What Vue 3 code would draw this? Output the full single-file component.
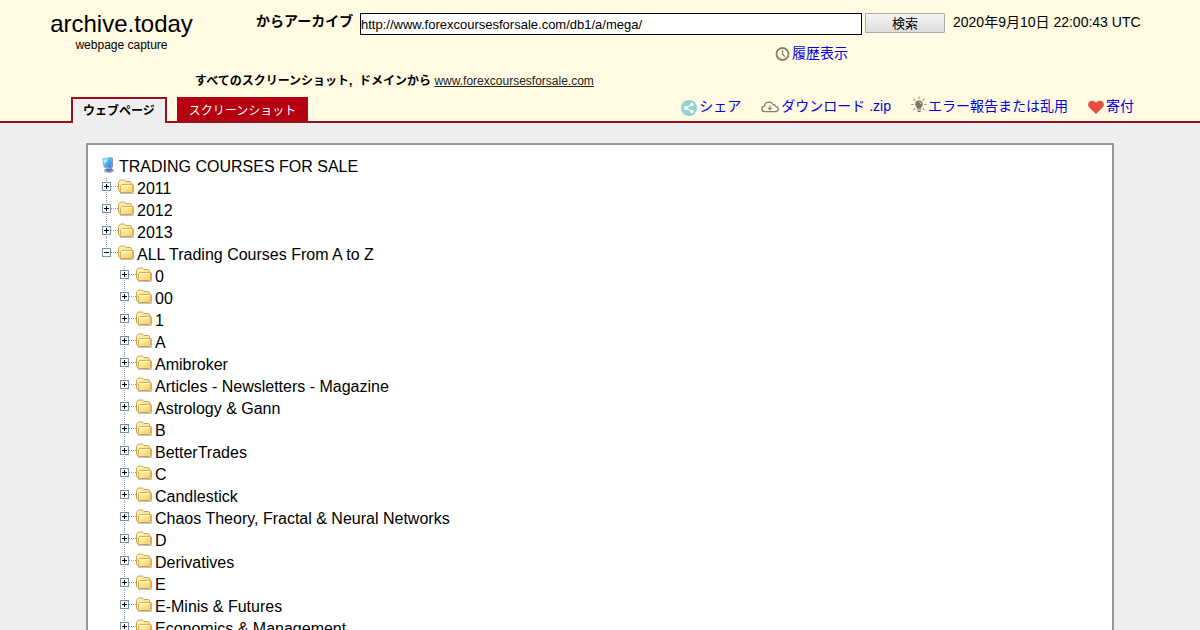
<script setup>
import { ref } from 'vue'

const url = ref('http://www.forexcoursesforsale.com/db1/a/mega/')

const tree = [
  { name: '2011' },
  { name: '2012' },
  { name: '2013' },
  {
    name: 'ALL Trading Courses From A to Z',
    children: [
      '0', '00', '1', 'A', 'Amibroker', 'Articles - Newsletters - Magazine',
      'Astrology & Gann', 'B', 'BetterTrades', 'C', 'Candlestick',
      'Chaos Theory, Fractal & Neural Networks', 'D', 'Derivatives', 'E',
      'E-Minis & Futures', 'Economics & Management',
    ],
  },
]

const rows = tree.flatMap((node) => [
  { name: node.name, level: 0, open: !!node.children },
  ...(node.children || []).map((name) => ({ name, level: 1, open: false })),
])
</script>

<template>
  <div class="page">
    <header class="header">
      <div class="top">
        <div class="brand">
          <a class="brand-name" href="#">archive.today</a>
          <span class="brand-sub">webpage capture</span>
        </div>
        <div class="search">
          <form class="search-form" @submit.prevent>
            <label class="search-label" for="q">からアーカイブ</label>
            <input id="q" v-model="url" class="search-input" type="text" />
            <button class="search-button" type="submit">検索</button>
            <time class="stamp">2020年9月10日 22:00:43 UTC</time>
          </form>
          <div class="history">
            <a class="action" href="#">
              <svg class="icon" width="16" height="16" viewBox="0 0 16 16">
                <circle cx="8.500" cy="8" r="6" fill="none" stroke="#85826f" stroke-width="1.800" />
                <path d="M8.500 4v4.300l2.500 2.500" fill="none" stroke="#85826f" stroke-width="1.300" />
              </svg>履歴表示</a>
          </div>
        </div>
      </div>
      <p class="domain"><b>すべてのスクリーンショット,&nbsp; ドメインから</b> <a href="#">www.forexcoursesforsale.com</a></p>
      <div class="bar">
        <nav class="tabs">
          <a class="tab active" href="#">ウェブページ</a>
          <a class="tab" href="#">スクリーンショット</a>
        </nav>
        <nav class="actions">
          <a class="action" href="#">
            <svg class="icon low" width="16" height="16" viewBox="0 0 16 16">
              <circle cx="8" cy="8" r="8" fill="#8dd5d6" />
              <path d="M11 4.500L5 8l6 3.500" fill="none" stroke="#fff" stroke-width="1.200" />
              <circle cx="11" cy="4.500" r="1.700" fill="#fff" />
              <circle cx="5" cy="8" r="1.900" fill="#fff" />
              <circle cx="11" cy="11.500" r="1.700" fill="#fff" />
            </svg>シェア</a>
          <a class="action" href="#">
            <svg class="icon" width="18" height="16" viewBox="0 0 18 16">
              <path d="M4.500 12.700C2 12.700.8 11.300.8 9.900c0-1.500 1.100-2.500 2.700-2.700C3.600 4.900 5.400 3.200 8 3.200c2 0 3.500 1 4.200 2.600 1-.2 2 .3 2.300 1.500 1.600.2 2.700 1.200 2.700 2.600 0 1.600-1.200 2.800-3.200 2.800z" fill="none" stroke="#85826f" stroke-width="1.300" />
              <path d="M9 6.500v4M7.300 8.900L9 10.600l1.700-1.700" fill="none" stroke="#85826f" stroke-width="1.200" />
            </svg>ダウンロード .zip</a>
          <a class="action" href="#">
            <svg class="icon high" width="16" height="18" viewBox="0 0 16 18">
              <path d="M8 4.500a3.800 3.800 0 0 1 3.800 3.800c0 2-1.800 2.500-1.800 4.500H6c0-2-1.800-2.500-1.800-4.500A3.800 3.800 0 0 1 8 4.500z" fill="#77766a" />
              <path d="M6 14h4M6.500 15.500h3" stroke="#77766a" stroke-width="1" />
              <path d="M8 .5v2.200M.3 8.500h2.400M13.300 8.500h2.400M2.500 3l1.700 1.700M13.500 3l-1.700 1.700M2.500 14l1.700-1.700M13.500 14l-1.700-1.700" stroke="#96947f" stroke-width="1.200" />
              <path d="M8.300 6.200a2 2 0 0 1 1.800 1.900" stroke="#e8e4d0" stroke-width="1" fill="none" />
            </svg>エラー報告または乱用</a>
          <a class="action" href="#">
            <svg class="icon" width="16" height="16" viewBox="0 0 16 16">
              <path d="M8 15L1.600 8.800C-.4 6.800-.2 4.200 1.400 2.800 3.400 1 6.600 1.400 8 4c1.400-2.600 4.600-3 6.600-1.200 1.600 1.400 1.800 4-.2 6z" fill="#e74c3c" />
            </svg>寄付</a>
        </nav>
      </div>
    </header>

    <svg class="defs" width="0" height="0" aria-hidden="true">
      <defs>
        <linearGradient id="gold" x1="0" y1="0" x2="1" y2="1">
          <stop offset="0" stop-color="#fff9c4" />
          <stop offset="1" stop-color="#f8cd60" />
        </linearGradient>
        <linearGradient id="screen" x1="0" y1="0" x2="1" y2="1">
          <stop offset="0" stop-color="#a5edff" />
          <stop offset="1" stop-color="#1779cf" />
        </linearGradient>
        <symbol id="folder" viewBox="0 0 18 18">
          <path d="M3 15.500h13.500V7" fill="none" stroke="#c4c4c4" stroke-width="1" />
          <path d="M3.500 14.500L1.500 12.500V4.500l1-1.500 1-1h4l1.500 1.500h4.500l1 1v2h1.500v7l-1 1z" fill="url(#gold)" stroke="#cfa04a" />
          <path d="M3.500 14V7.500l1-1H15.500v7" fill="url(#gold)" stroke="#dfb052" />
          <path d="M4.500 7.500h10" stroke="#fffbd0" />
        </symbol>
      </defs>
    </svg>

    <main class="capture">
      <div class="row root">
        <svg class="computer" width="18" height="18" viewBox="0 0 18 18">
          <path d="M4 13.500l5-1.500 5 1.500v2L9.500 17.300 4 16z" fill="#b4b4d8" />
          <path d="M6 12.500h6l1 2-4 1.500-3.500-1z" fill="#7070a8" />
          <path d="M10.500 2.500L13 1.500V11l-2 2.500z" fill="#8f8fc4" />
          <path d="M2.500 3L11.300 1.300v10.900L4 11.300z" fill="url(#screen)" stroke="#70b5df" stroke-width=".7" />
          <path d="M3.500 4l5-1-4.200 5z" fill="#d8faff" opacity=".7" />
        </svg>
        <span class="name">TRADING COURSES FOR SALE</span>
      </div>
      <div v-for="row in rows" :key="row.name" class="row" :class="{ nested: row.level }">
        <svg class="join" width="18" height="22" viewBox="0 0 18 22">
          <path v-if="!row.open" d="M6.500 0v22" stroke="#8c9bab" stroke-dasharray="1 1" />
          <path v-else d="M6.500 0v5" stroke="#8c9bab" stroke-dasharray="1 1" />
          <path d="M11 8.500h7" stroke="#8c9bab" stroke-dasharray="1 1" />
          <rect x="2.500" y="4.500" width="8" height="8" fill="#fff" stroke="#7890a8" />
          <path d="M4 8.500h5" stroke="#000" />
          <path v-if="!row.open" d="M6.500 6v5" stroke="#000" />
        </svg>
        <svg class="folder" width="18" height="18"><use href="#folder" /></svg>
        <span class="name">{{ row.name }}</span>
      </div>
    </main>
  </div>
</template>

<style>
body {
  margin: 0;
  background: #eee;
}
</style>

<style scoped>
.page {
  height: 100vh;
  overflow: hidden;
  background: #eee;
  color: #000;
  font-family: "Liberation Sans", "Noto Sans CJK JP", sans-serif;
  font-size: 14px;
}
.header {
  background: #fffae1;
  border-bottom: 2px solid #990f22;
}
.top {
  display: flex;
  height: 72px;
}
.brand {
  flex: 0 0 243px;
  display: flex;
  flex-direction: column;
  align-items: center;
  padding-top: 10px;
}
.brand-name {
  font-size: 24px;
  line-height: 28px;
  color: #000;
  text-decoration: none;
}
.brand-sub {
  font-size: 12px;
  line-height: 14px;
}
.search {
  flex: 1;
  padding: 13px 56px 0 13px;
}
.search-form {
  display: flex;
  align-items: flex-start;
}
.search-label {
  flex: 0 0 104px;
  font-weight: bold;
  line-height: 16px;
  white-space: nowrap;
}
.search-input {
  flex: 1;
  min-width: 0;
  height: 22px;
  box-sizing: border-box;
  padding: 0;
  border: 1px solid #000;
  border-radius: 0;
  background: #fff;
  font: 13px "Liberation Sans", sans-serif;
}
.search-button {
  width: 80px;
  height: 20px;
  margin: 0 8px 0 3px;
  padding: 0;
  border: 1px solid #a9a9a9;
  border-radius: 1px;
  background: linear-gradient(#f4f4f4, #dcdcdc);
  color: #000;
  font: 13px/20px "Liberation Sans", "Noto Sans CJK JP", sans-serif;
}
.stamp {
  flex: 0 0 191px;
  line-height: 18px;
  white-space: nowrap;
}
.history {
  display: flex;
  justify-content: flex-end;
  margin-top: 8px;
  padding-right: 296px;
}
.action {
  display: flex;
  color: #00d;
  line-height: 20px;
  text-decoration: none;
  white-space: nowrap;
}
.icon {
  flex: none;
  margin: 3px 2px 0 0;
}
.icon.low {
  margin-top: 4px;
}
.icon.high {
  margin: 0 1px 0 0;
}
.domain {
  margin: 0;
  padding-left: 195px;
  font-size: 12px;
  line-height: 18px;
}
.domain a {
  color: #222;
}
.bar {
  display: flex;
  justify-content: space-between;
  align-items: flex-end;
  margin-top: 5px;
  padding: 0 66px 0 71px;
}
.tabs {
  display: flex;
  gap: 10px;
  margin-top: 2px;
}
.tab {
  height: 24px;
  padding: 0 12px;
  background: #b40010;
  color: #fff;
  font-size: 12px;
  line-height: 28px;
  text-decoration: none;
}
.tab.active {
  margin-bottom: -2px;
  padding: 0 10px;
  border: 2px solid #990f22;
  border-bottom: 0;
  background: #eee;
  color: #000;
  font-weight: bold;
  line-height: 24px;
}
.actions {
  display: flex;
  gap: 20px;
  height: 25px;
}
.defs {
  display: block;
}
.capture {
  margin: 20px 86px 0;
  padding: 11px 12px 0;
  min-height: 100vh;
  border: 2px solid #999;
  background: #fff;
  font-size: 16px;
}
.row {
  display: flex;
  height: 22px;
  line-height: 22px;
  white-space: nowrap;
}
.nested {
  padding-left: 18px;
}
.folder {
  margin: 0 2px 0 -1px;
}
.root .name {
  margin-left: 1px;
}
</style>
